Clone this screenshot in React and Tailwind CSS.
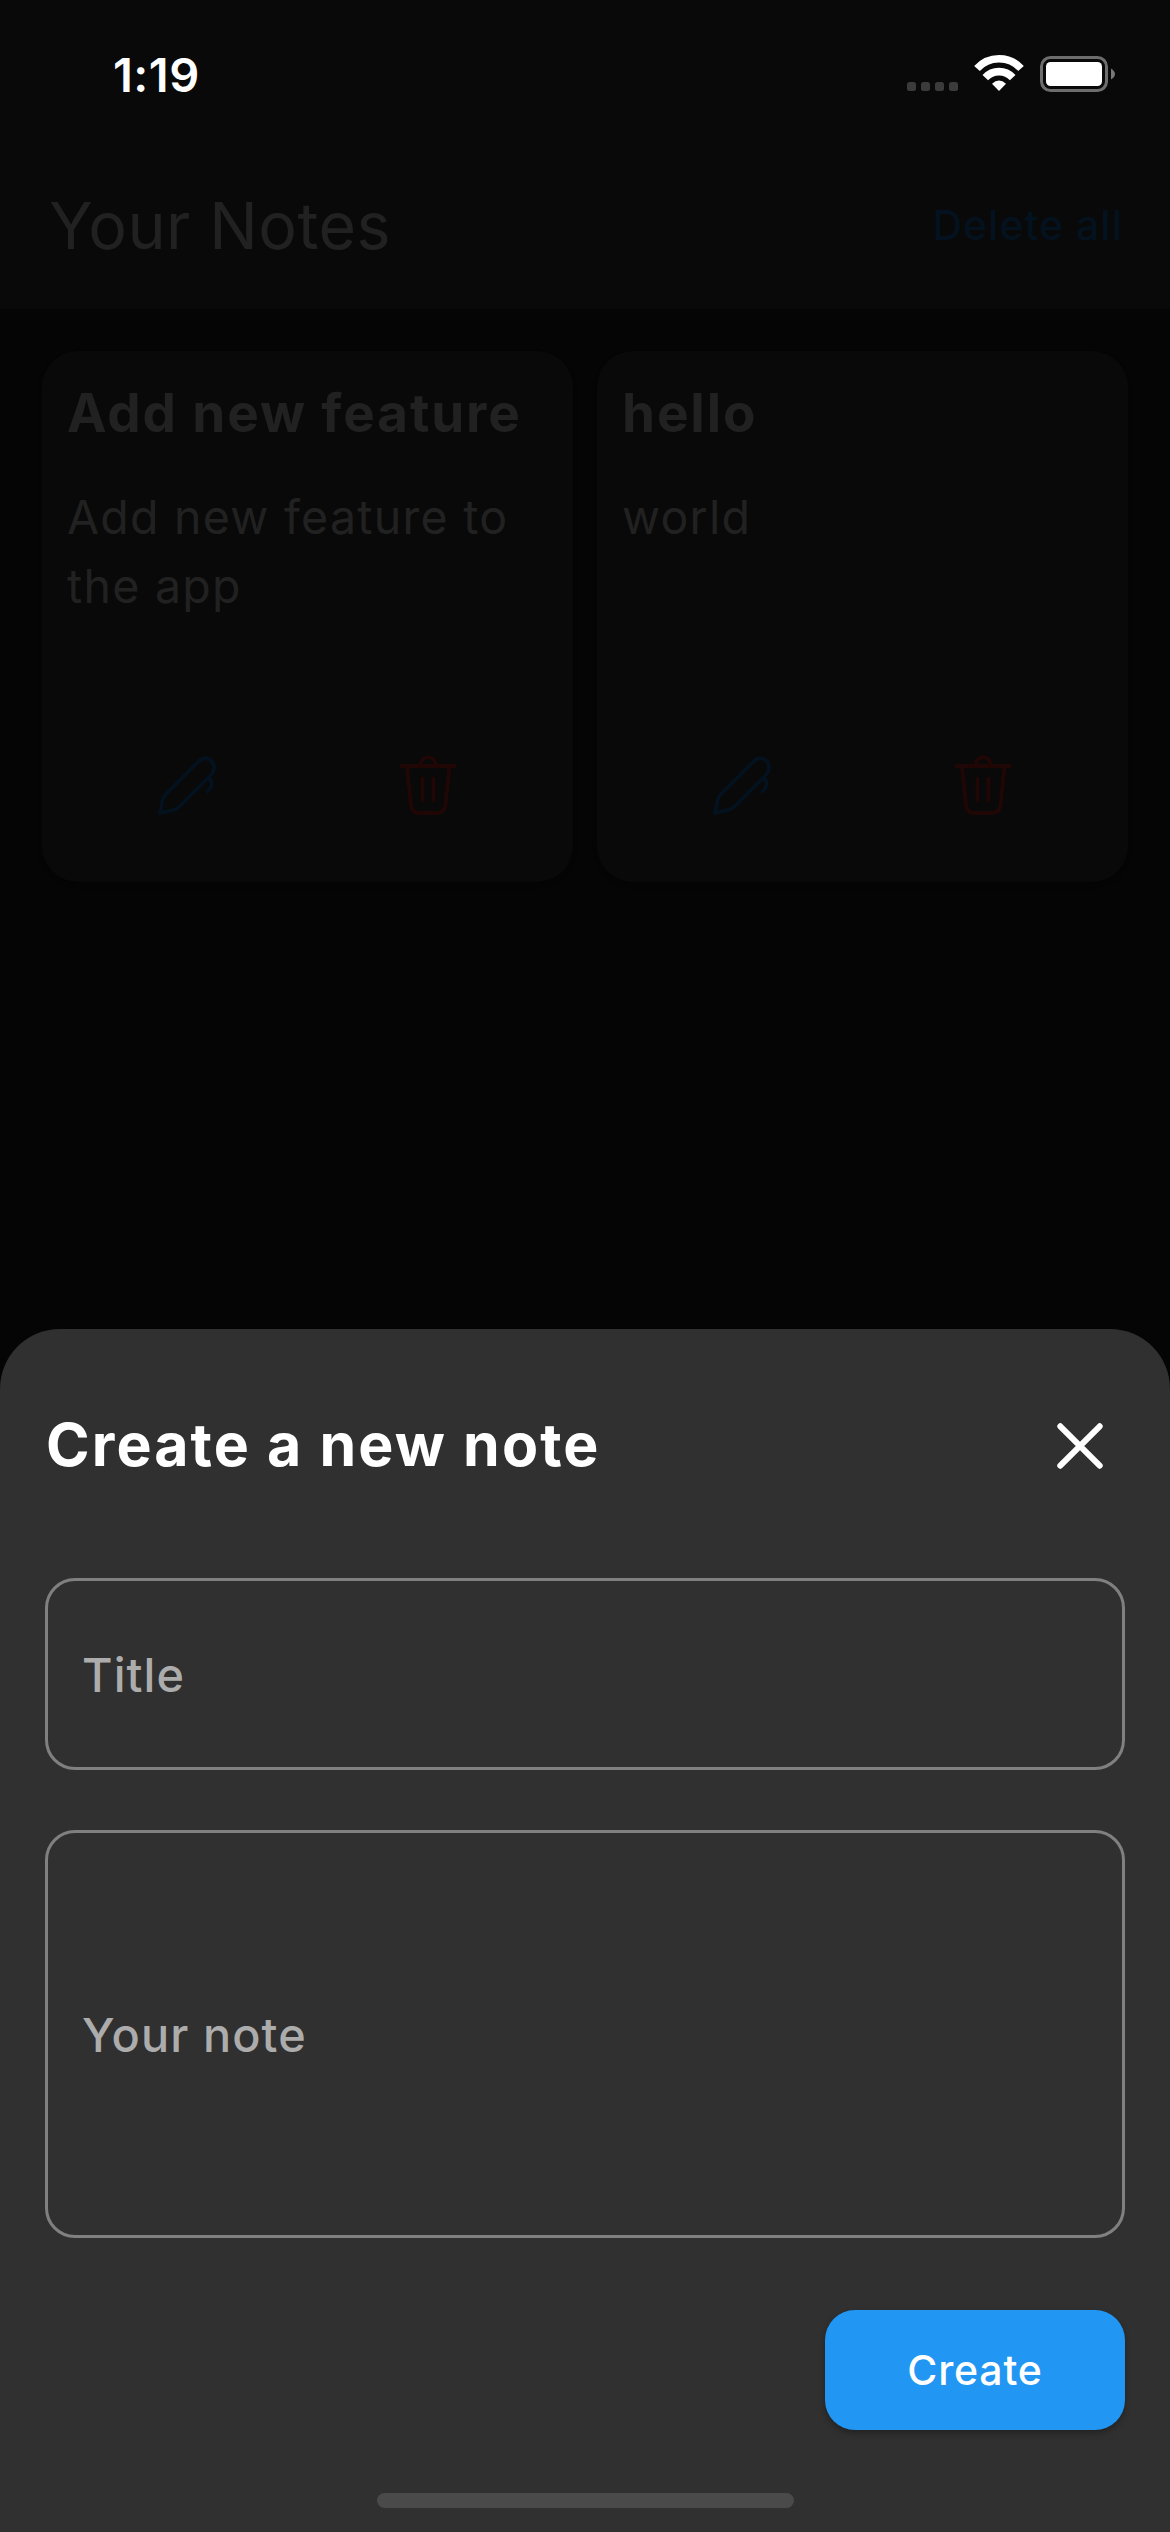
function Pencil() {
  return (
    <svg width="64" height="64" viewBox="0 0 64 64" fill="none" stroke="currentColor" strokeWidth="3.8" strokeLinecap="round" strokeLinejoin="round">
      <path d="M5 58 L7.200 47 Q8.200 42 10.500 39.700 L43 7 C47.500 2.200 53.500 2 57 6.500 C60 11 59.500 16 56 20 L25 51 Q22 54 18 55 Z" />
      <path d="M53.500 23 C57.500 26.500 58.500 30.500 52.500 36.500" />
    </svg>
  );
}

function Trash() {
  return (
    <svg width="64" height="64" viewBox="0 0 64 64" fill="none" stroke="currentColor" strokeWidth="3.8" strokeLinecap="round" strokeLinejoin="round">
      <path d="M5.200 11 H58.800 M11 12 L15 50 Q16 58 23.500 58 H41 Q48.500 58 49.500 50 L53.500 12" />
      <path d="M24.600 10.500 V9.700 A7.500 7.500 0 0 1 39.600 9.700 V10.500 M26.500 23.500 V45.500 M37.500 23.500 V45.500" />
    </svg>
  );
}

function NoteCard({ title, body }) {
  return (
    <article className="flex h-[531px] flex-col rounded-[36px] bg-[#090909] pt-[28px] text-[#212121] shadow-[0_3px_4px_rgba(0,0,0,0.25)]">
      <h2 className="h-[68px] pl-[25px] text-[53px] leading-[68px] font-bold tracking-[1.9px] whitespace-nowrap">{title}</h2>
      <p className="mt-[36px] pr-6 pl-[25px] text-[46.5px] leading-[69px] tracking-[1.25px]">{body}</p>
      <div className="mt-auto mb-[63px] flex justify-around px-6">
        <span className="text-[#03121e]"><Pencil /></span>
        <span className="text-[#200706]"><Trash /></span>
      </div>
    </article>
  );
}

export default function App() {
  return (
    <div className="relative flex h-[2532px] w-[1170px] flex-col overflow-hidden bg-[#050505] font-['Inter',sans-serif]">
      <header className="h-[309px] bg-[#090909]">
        <div className="flex h-[142px] items-start justify-between pt-[46px] pr-[54px] pl-[113px] text-white">
          <span className="text-[47px] leading-[58px] font-semibold tracking-[0.5px]">1:19</span>
          <svg className="mt-[6px]" width="212" height="50" viewBox="904 52 212 50" fill="none">
            <g fill="#3b3b3b">
              <rect x="907" y="82" width="9" height="9" rx="2.500" />
              <rect x="921" y="82" width="9" height="9" rx="2.500" />
              <rect x="935" y="82" width="9" height="9" rx="2.500" />
              <rect x="949" y="82" width="9" height="9" rx="2.500" />
            </g>
            <g stroke="white" strokeWidth="7.600">
              <path d="M977 68.500 A29.600 29.600 0 0 1 1021 68.500" />
              <path d="M985.300 77.600 A18.600 18.600 0 0 1 1012.700 77.600" />
            </g>
            <path d="M992 83.800 Q999 77 1006 83.800 L999 91 Z" fill="white" />
            <rect x="1041.500" y="57.500" width="65" height="33" rx="9" stroke="#6d6d6d" strokeWidth="3" />
            <rect x="1046" y="62" width="56" height="24" rx="4.500" fill="white" />
            <path d="M1111 68.500 Q1115 71 1115 74 Q1115 77 1111 79.500 Z" fill="#777777" />
          </svg>
        </div>
        <div className="flex h-[167px] items-center justify-between pr-[47px] pl-[49px]">
          <h1 className="text-[64.5px] leading-[80px] tracking-[0.45px] text-[#212121]">Your Notes</h1>
          <button className="pb-[2px] text-[41px] leading-[50px] font-medium tracking-[1px] text-[#03121e]">Delete all</button>
        </div>
      </header>
      <main className="grid grid-cols-2 gap-x-6 px-[42px] pt-[42px]">
        <NoteCard title="Add new feature" body="Add new feature to the app" />
        <NoteCard title="hello" body="world" />
      </main>
      <section className="absolute inset-x-0 bottom-0 flex h-[1203px] flex-col rounded-t-[60px] bg-[#303030] px-[45px]">
        <div className="flex h-[249px] items-center justify-between pb-[16px]">
          <h2 className="pb-px pl-px text-[59px] leading-[72px] font-bold tracking-[2.1px] text-white">Create a new note</h2>
          <svg className="mr-[22px]" width="46" height="46" viewBox="0 0 46 46" stroke="white" strokeWidth="6" strokeLinecap="round">
            <path d="M3.300 3.300 L42.700 42.700 M42.700 3.300 L3.300 42.700" />
          </svg>
        </div>
        <div className="flex h-[192px] items-center rounded-[30px] border-[3px] border-[#808080] px-[34px] pt-[2px] text-[46.8px] leading-[60px] font-medium tracking-[1.1px] text-[#acacac]">Title</div>
        <div className="mt-[60px] flex h-[408px] items-center rounded-[30px] border-[3px] border-[#808080] px-[34px] pt-[2px] text-[46.8px] leading-[60px] font-medium tracking-[1.1px] text-[#acacac]">Your note</div>
        <button className="mt-[72px] h-[120px] w-[300px] self-end rounded-[30px] bg-[#2196f3] pt-[2px] text-[41px] font-medium tracking-[0.8px] text-white shadow-[0_3px_6px_rgba(0,0,0,0.3)]">Create</button>
        <div className="mt-[63px] h-[15px] w-[417px] self-center rounded-full bg-[#4a4a4a]" />
      </section>
    </div>
  );
}
